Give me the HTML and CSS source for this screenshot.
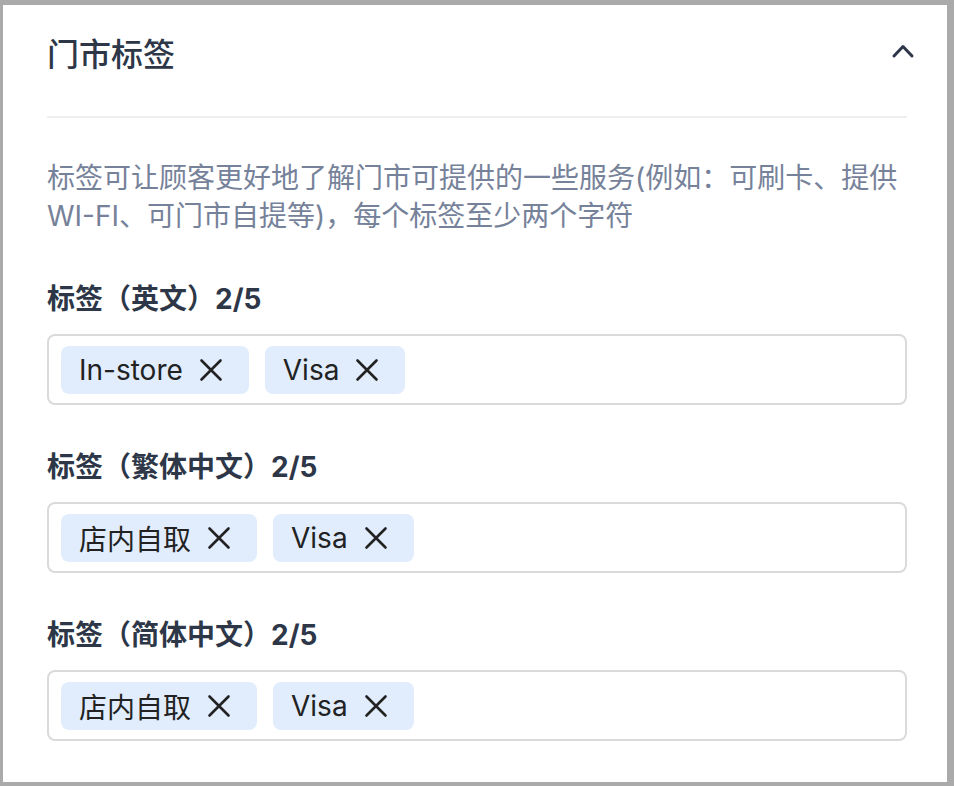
FILE: index.html
```html
<!DOCTYPE html>
<html lang="zh-CN">
<head>
    <meta charset="UTF-8">
    <meta name="viewport" content="width=device-width, initial-scale=1.0">
    <title>门市标签</title>
    <link rel="stylesheet" href="styles.css">
</head>
<body>
    <div class="panel">
        <div class="panel-header">
            <h2 class="panel-title">门市标签</h2>
            <button class="collapse-btn" aria-label="收起">
                <svg width="28" height="28" viewBox="0 0 28 28">
                    <path d="M5 15 L14 5.5 L23 15" fill="none" stroke="#2d3748" stroke-width="3" stroke-linecap="round" stroke-linejoin="round"/>
                </svg>
            </button>
        </div>

        <div class="panel-body">
            <p class="panel-desc">标签可让顾客更好地了解门市可提供的一些服务(例如：可刷卡、提供 WI-FI、可门市自提等)，每个标签至少两个字符</p>

            <div class="field">
                <div class="field-label">标签（英文）2/5</div>
                <div class="tag-input">
                    <span class="tag">In-store
                        <svg class="tag-close" width="28" height="28" viewBox="0 0 28 28"><path d="M4.5 4.5 L23.5 23.5 M23.5 4.5 L4.5 23.5"/></svg>
                    </span>
                    <span class="tag">Visa
                        <svg class="tag-close" width="28" height="28" viewBox="0 0 28 28"><path d="M4.5 4.5 L23.5 23.5 M23.5 4.5 L4.5 23.5"/></svg>
                    </span>
                </div>
            </div>

            <div class="field">
                <div class="field-label">标签（繁体中文）2/5</div>
                <div class="tag-input">
                    <span class="tag">店内自取
                        <svg class="tag-close" width="28" height="28" viewBox="0 0 28 28"><path d="M4.5 4.5 L23.5 23.5 M23.5 4.5 L4.5 23.5"/></svg>
                    </span>
                    <span class="tag">Visa
                        <svg class="tag-close" width="28" height="28" viewBox="0 0 28 28"><path d="M4.5 4.5 L23.5 23.5 M23.5 4.5 L4.5 23.5"/></svg>
                    </span>
                </div>
            </div>

            <div class="field">
                <div class="field-label">标签（简体中文）2/5</div>
                <div class="tag-input">
                    <span class="tag">店内自取
                        <svg class="tag-close" width="28" height="28" viewBox="0 0 28 28"><path d="M4.5 4.5 L23.5 23.5 M23.5 4.5 L4.5 23.5"/></svg>
                    </span>
                    <span class="tag">Visa
                        <svg class="tag-close" width="28" height="28" viewBox="0 0 28 28"><path d="M4.5 4.5 L23.5 23.5 M23.5 4.5 L4.5 23.5"/></svg>
                    </span>
                </div>
            </div>
        </div>
    </div>
</body>
</html>
```

FILE: styles.css
```css
* {
    margin: 0;
    padding: 0;
    box-sizing: border-box;
    font-family: Inter, "Noto Sans CJK SC", sans-serif;
}
body {
    height: 100vh;
    background: #aaaaaa;
    padding: 5px 7px 4px 3px;
    display: flex;
}
.panel {
    flex: 1;
    background: #fff;
    padding: 0 40px 40px 44px;
    display: flex;
    flex-direction: column;
}
.panel-header {
    display: flex;
    align-items: center;
    justify-content: space-between;
    padding: 28px 0 39px;
    border-bottom: 2px solid #eeeeee;
}
.panel-title {
    font-size: 32px;
    line-height: 44px;
    font-weight: 500;
    color: #2d3748;
}
.collapse-btn {
    border: none;
    background: none;
    display: flex;
    margin-right: -10px;
    cursor: pointer;
}
.panel-body {
    display: flex;
    flex-direction: column;
    gap: 42px;
    padding-top: 41px;
}
.panel-desc {
    font-size: 28px;
    line-height: 38px;
    color: #76829a;
    margin-bottom: 2px;
}
.field-label {
    font-size: 28px;
    line-height: 40px;
    font-weight: 700;
    color: #2d3748;
    margin-bottom: 15px;
}
.tag-input {
    display: flex;
    gap: 16px;
    padding: 10px 12px 9px;
    border: 2px solid #dadada;
    border-radius: 8px;
}
.tag {
    display: flex;
    align-items: center;
    gap: 14px;
    height: 48px;
    padding: 0 24px 0 18px;
    background: #e1edfd;
    border-radius: 8px;
    font-size: 28px;
    color: #222;
}
.tag-close path {
    fill: none;
    stroke: #222;
    stroke-width: 2.6;
    stroke-linecap: round;
}
```
